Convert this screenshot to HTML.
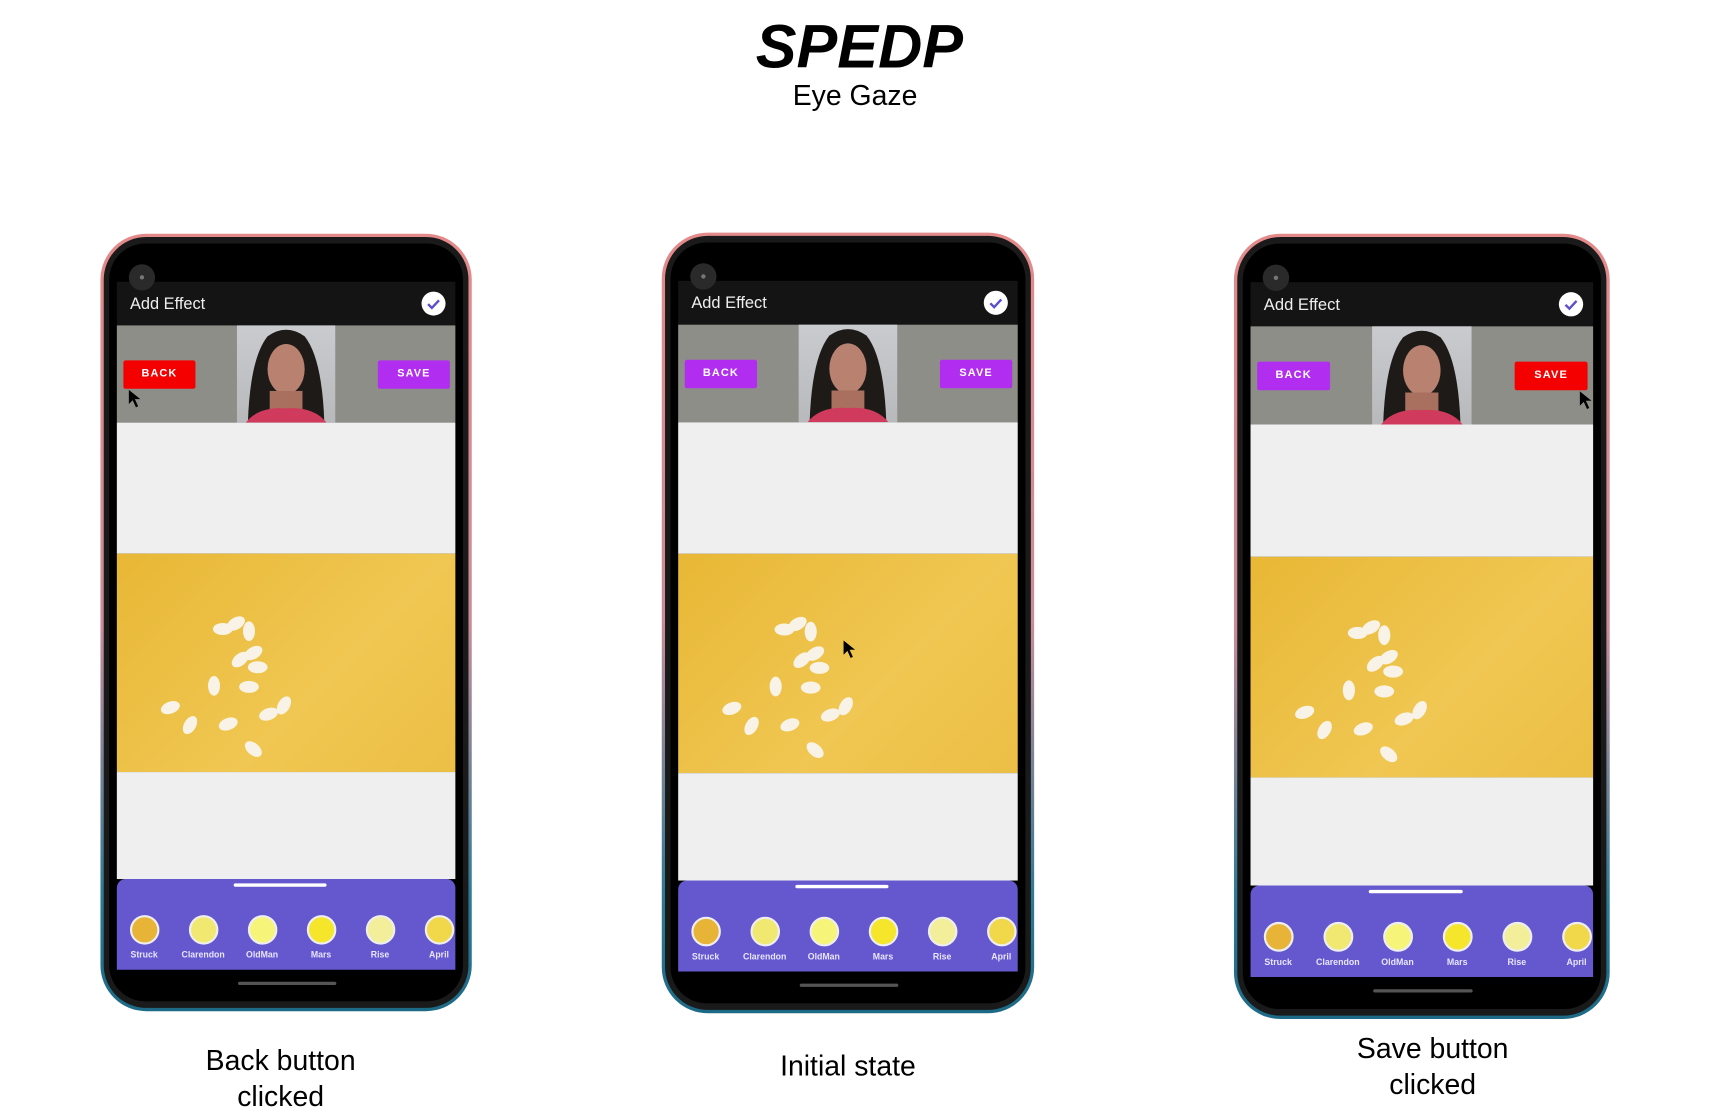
<!DOCTYPE html>
<html><head><meta charset="utf-8"><style>
html,body{margin:0;padding:0;background:#fff;overflow:hidden;width:1710px;height:1114px}
#w{position:absolute;left:0;top:0;width:1556px;height:1014px;transform:scale(1.092);transform-origin:0 0;font-family:"Liberation Sans",sans-serif}
.t{position:absolute;text-align:center;color:#000}
.ph{position:absolute;width:340px;height:712px;transform-origin:0 0}
.frame{position:absolute;inset:0;border-radius:42px;background:linear-gradient(#e48a8a 0%,#c98c98 50%,#2d7a95 85%,#1d6a86 100%)}
.bez{position:absolute;left:3px;top:3px;right:3px;bottom:3px;border-radius:39px;background:#1a1a1a}
.bez2{position:absolute;left:8px;top:9px;right:8px;bottom:9px;border-radius:33px;background:#000;overflow:hidden}
.sc{position:absolute;left:7px;width:310px}
.cam{position:absolute;left:18px;top:19px;width:24px;height:24px;border-radius:50%;background:#2a2a2a;z-index:2}
.cam:after{content:"";position:absolute;left:10px;top:10px;width:4px;height:4px;border-radius:50%;background:#777}
.ab{position:absolute;top:35px;height:40px;left:7px;width:310px;background:#141414;color:#eee;font-size:15px}
.ab span{position:absolute;left:12px;top:12px}
.chk{position:absolute;right:9px;top:9px;width:22px;height:22px;border-radius:50%;background:#fff}
.band{top:75px;height:89px;background:#8e8e89}
.photo{position:absolute;left:110px;top:0;width:90px;height:89px;background:linear-gradient(#c9cbcf,#b8b9bb)}
.btn{position:absolute;top:32px;width:66px;height:26px;border-radius:2px;color:#fff;font-size:10px;font-weight:bold;letter-spacing:1px;text-align:center;line-height:26px}
.lg{background:#efefef}
.yl{background:linear-gradient(135deg,#e8b735,#f0c752 60%,#ecbf45)}
.pu{background:#6558cf;border-radius:8px 8px 0 0}
.c{position:absolute;top:33px;width:27px;height:27px;border-radius:50%;border:2px solid #eee;box-sizing:border-box}
.lb{position:absolute;top:65px;font-size:8px;color:#e8e6ff;font-weight:bold;width:60px;text-align:center}
.cur{position:absolute}
</style></head><body><div id="w">
<div class="t" style="left:0;width:1574px;top:10px;font-size:56px;font-weight:bold;font-style:italic">SPEDP</div>
<div class="t" style="left:0;width:1566px;top:72px;font-size:26px">Eye Gaze</div>
<div class="t" style="left:92px;width:330px;top:955px;font-size:26px;line-height:33px">Back button<br>clicked</div>
<div class="t" style="left:606px;width:341px;top:961px;font-size:26px">Initial state</div>
<div class="t" style="left:1140px;width:344px;top:944px;font-size:26px;line-height:33px">Save button<br>clicked</div>
<div id="phones"></div>
</div>
<script>
function phone(x,y,sx,sy,mode){
 var pills='';
 var P=[[58,60,0],[70,55,-30],[82,62,90],[74,88,-40],[86,82,-30],[90,95,0],[50,112,90],[82,113,0],[10,132,-20],[28,148,-60],[63,147,-20],[100,138,-20],[114,130,-60],[86,170,40]];
 P.forEach(function(p){pills+='<ellipse cx="'+(p[0]+39)+'" cy="'+(p[1]+9)+'" rx="9" ry="5.5" fill="#f8f3e6" transform="rotate('+p[2]+' '+(p[0]+39)+' '+(p[1]+9)+')"/>';});
 var circ='',names=['Struck','Clarendon','OldMan','Mars','Rise','April'],cols=['#e8b437','#f0e870','#f6f57a','#f5e62b','#f2ee9a','#f1d84a'];
 for(var i=0;i<6;i++){var cx=12+i*54;circ+='<div class="c" style="left:'+cx+'px;background:'+cols[i]+'"></div><div class="lb" style="left:'+(cx-17)+'px">'+names[i]+'</div>';}
 var bcol=mode==1?'#f40000':'#b12ef0',scol=mode==3?'#f40000':'#b12ef0';
 var arrow='<svg width="14" height="18" viewBox="0 0 14 18"><path d="M1 1 L1 14 L4.5 10.5 L7.5 17 L9.5 16 L6.5 9.5 L11.5 9.5 Z" fill="#000"/></svg>';
 var cur='';
 if(mode==1)cur='<div class="cur" style="left:10px;top:58px">'+arrow+'</div>';
 if(mode==3)cur='<div class="cur" style="left:297px;top:58px">'+arrow+'</div>';
 var cur2=mode==2?'<div class="cur" style="left:150px;top:78px">'+arrow+'</div>':'';
 return '<div class="ph" style="left:'+x+'px;top:'+y+'px;transform:scale('+sx+','+sy+')"><div class="frame"></div><div class="bez"></div><div class="bez2">'+
 '<div class="cam"></div><div class="ab"><span>Add Effect</span><div class="chk"><svg width="22" height="22"><path d="M6 11.5l3.5 3.5 6.5-7" stroke="#5a4fcf" stroke-width="2.2" fill="none"/></svg></div></div>'+
 '<div class="sc band"><div class="photo"><svg width="90" height="89"><path d="M10 89 Q12 30 28 10 Q45 -2 62 10 Q78 30 80 89Z" fill="#1e1a18"/><ellipse cx="45" cy="40" rx="17" ry="23" fill="#b98270"/><rect x="30" y="60" width="30" height="20" fill="#a9705f"/><path d="M8 89 Q20 74 45 76 Q70 74 82 89Z" fill="#d03a5c"/></svg></div>'+
 '<div class="btn" style="left:6px;background:'+bcol+'">BACK</div><div class="btn" style="left:239px;background:'+scol+'">SAVE</div>'+cur+'</div>'+
 '<div class="sc lg" style="top:164px;height:120px"></div>'+
 '<div class="sc yl" style="top:284px;height:200px"><svg width="310" height="200" style="position:absolute">'+pills+'</svg>'+cur2+'</div>'+
 '<div class="sc lg" style="top:484px;height:98px"></div>'+
 '<div class="sc pu" style="top:582px;height:83px"><div style="position:absolute;left:107px;top:4px;width:85px;height:3px;background:#fff;border-radius:2px"></div>'+circ+'</div>'+
 '<div style="position:absolute;left:118px;top:676px;width:90px;height:3px;background:#555;border-radius:2px"></div>'+
 '</div></div>';
}
document.getElementById('phones').innerHTML=phone(92,214,1,1,1)+phone(606,213,1.003,1.004,2)+phone(1130,214,1.012,1.01,3);
</script>
</body></html>
